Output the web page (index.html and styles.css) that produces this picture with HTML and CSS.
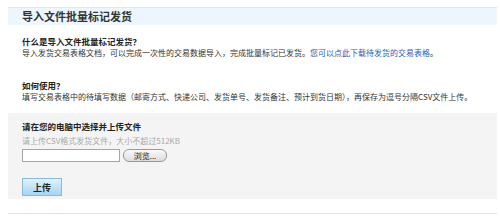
FILE: index.html
```html
<!DOCTYPE html>
<html lang="zh-CN">
  <head>
    <meta charset="UTF-8" />
    <title>导入文件批量标记发货</title>
    <link rel="stylesheet" href="styles.css">
  </head>
  <body>
    <div class="page">
      <!-- Header -->
      <div class="header">导入文件批量标记发货</div>

      <!-- Help -->
      <div class="help">
        <h3>什么是导入文件批量标记发货？</h3>
        <p>导入发货交易表格文档，可以完成一次性的交易数据导入，完成批量标记已发货。<a href="#">您可以点此下载待发货的交易表格</a>。</p>
      </div>
      <div class="help help-second">
        <h3>如何使用？</h3>
        <p>填写交易表格中的待填写数据（邮寄方式、快递公司、发货单号、发货备注、预计到货日期），再保存为逗号分隔CSV文件上传。</p>
      </div>

      <!-- Upload box -->
      <div class="upload-box">
        <h3>请在您的电脑中选择并上传文件</h3>
        <p class="hint">请上传CSV格式发货文件，大小不超过512KB</p>
        <div class="file-row">
          <span class="file-input"></span>
          <span class="browse">浏览...</span>
        </div>
        <button class="upload-btn" type="button">上传</button>
      </div>

      <div class="footer-line"></div>
    </div>
  </body>
</html>
```

FILE: styles.css
```css
body {
  margin: 0;
  background: #fff;
  font-family: "Noto Sans CJK SC", "Liberation Sans", sans-serif;
  color: #333;
}
.page {
  margin: 7px 3px 0 8px;
  display: flex;
  flex-direction: column;
}
.header {
  height: 17px;
  line-height: 17px;
  background-color: #eef6fd;
  border-top: 1px solid #dde9f4;
  padding-left: 14px;
  font-size: 11px;
  font-weight: bold;
  color: #333;
}
.help {
  padding: 11px 0 0 14px;
}
.help-second {
  padding-top: 22px;
}
.help h3,
.upload-box h3 {
  margin: 0;
  font-size: 8.5px;
  line-height: 11px;
  font-weight: bold;
  color: #222;
}
.help p {
  margin: 0;
  font-size: 8px;
  line-height: 11px;
  color: #333;
  white-space: nowrap;
}
.help a {
  color: #2a5db0;
  text-decoration: none;
}
.upload-box {
  margin-top: 11px;
  height: 86px;
  background-color: #f4f4f4;
  padding: 8px 0 0 14px;
  box-sizing: border-box;
}
.upload-box .hint {
  margin: 3px 0 0;
  font-size: 8px;
  line-height: 11px;
  color: #aaa;
}
.file-row {
  display: flex;
  align-items: center;
  gap: 3px;
  margin-top: 3px;
}
.file-input {
  width: 96px;
  height: 11px;
  background: #fff;
  border: 1px solid #a5a5a5;
}
.browse {
  width: 42px;
  height: 11px;
  line-height: 11px;
  border: 1px solid #999;
  border-radius: 6px;
  background: linear-gradient(#fafafa, #dcdcdc);
  font-size: 8px;
  text-align: center;
  color: #222;
}
.upload-btn {
  display: block;
  margin-top: 16px;
  width: 40px;
  height: 18px;
  padding: 0;
  border: 1px solid #86bbe0;
  background: linear-gradient(#e2f2fd, #a6d4f2);
  font-family: "Noto Sans CJK SC", sans-serif;
  font-size: 9px;
  font-weight: bold;
  color: #222;
}
.footer-line {
  margin-top: 14px;
  height: 0;
  border-top: 1px solid #e3e3e3;
}
```
